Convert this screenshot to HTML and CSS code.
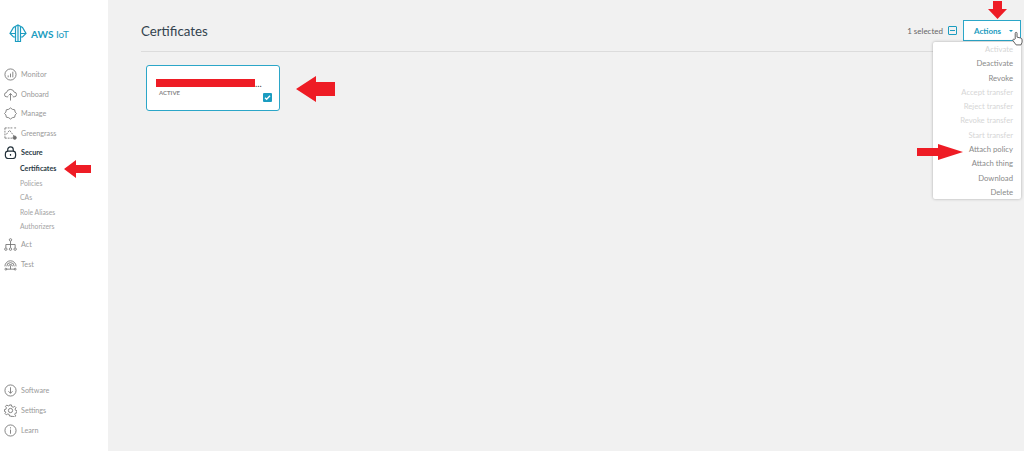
FILE: index.html
```html
<!DOCTYPE html>
<html>

<head>
  <meta name="viewport" content="width=device-width, initial-scale=1">
  <link rel="stylesheet" href="styles.css">
</head>

<body>
  <div class="sidebar">
    <div class="logo">
      <svg width="18" height="19" viewBox="0 0 18 19" fill="none" stroke="#1b9cc0" stroke-width="1.200">
        <path d="M9 1L13.500 3.500L17 9.500L13.500 13L11.500 13V17.500H6.500V13L4.500 13L1 9.500L4.500 3.500Z" />
        <path d="M6.500 3V13M11.500 3V13M9 1V18M1 9.500H6.500M11.500 9.500H17" />
      </svg>
      <span class="logo-text"><b>AWS</b> IoT</span>
    </div>

    <div class="nav-top">
      <a class="nav-item">
        <svg class="nav-icon" viewBox="0 0 14 14"><circle cx="7" cy="7" r="6" /><path d="M4.500 10V8M7 10V6M9.500 10V4" /></svg>
        Monitor
      </a>
      <a class="nav-item">
        <svg class="nav-icon" viewBox="0 0 14 14"><path d="M4.500 9.500H3a2.300 2.300 0 0 1-.3-4.600A4.300 4.300 0 0 1 11 4.500a2.500 2.500 0 0 1 0 5H9.500M7 13.500V6M5 8l2-2 2 2" /></svg>
        Onboard
      </a>
      <a class="nav-item">
        <svg class="nav-icon" viewBox="0 0 14 14"><path d="M7 1L9 2.500L11.500 3L12 5.500L13.500 7L12 8.500L11.500 11L9 11.500L7 13L5 11.500L2.500 11L2 8.500L0.500 7L2 5.500L2.500 3L5 2.500Z" /></svg>
        Manage
      </a>
      <a class="nav-item">
        <svg class="nav-icon" viewBox="0 0 14 14"><path d="M1 1H9M1 1V12M1 12H9M2.500 8L6 3.500L11 10M11 1H13" stroke-dasharray="2 1" /><circle class="icon-dot" cx="11.500" cy="11.500" r="1.800" /></svg>
        Greengrass
      </a>
      <a class="nav-item nav-active">
        <svg class="nav-icon" viewBox="0 0 14 14"><rect x="1.500" y="5.500" width="11" height="8" rx="3" /><path d="M4 5.500V4a3 3 0 0 1 6 0v1.500M7 8.500v2" /></svg>
        Secure
      </a>
      <div class="subnav">
        <a class="sub-item sub-active">Certificates</a>
        <a class="sub-item">Policies</a>
        <a class="sub-item">CAs</a>
        <a class="sub-item">Role Aliases</a>
        <a class="sub-item">Authorizers</a>
      </div>
      <a class="nav-item">
        <svg class="nav-icon" viewBox="0 0 14 14"><circle cx="7" cy="2" r="1.300" /><circle cx="2" cy="12" r="1.300" /><circle cx="7" cy="12" r="1.300" /><circle cx="12" cy="12" r="1.300" /><path d="M7 3.500V10.500M2 10.500V7H12V10.500" /></svg>
        Act
      </a>
      <a class="nav-item">
        <svg class="nav-icon" viewBox="0 0 14 14"><path d="M1 9a6 6 0 1 1 12 0M3 9a4 4 0 1 1 8 0M5 9a2 2 0 1 1 4 0M7 8v4M2.500 12h9" /><circle cx="2" cy="12" r="1" /><circle cx="12" cy="12" r="1" /></svg>
        Test
      </a>
    </div>

    <div class="nav-bottom">
      <a class="nav-item">
        <svg class="nav-icon" viewBox="0 0 14 14"><circle cx="7" cy="7" r="6" /><path d="M7 3.500V10M4.800 7.800L7 10L9.200 7.800" /></svg>
        Software
      </a>
      <a class="nav-item">
        <svg class="nav-icon" viewBox="0 0 14 14"><circle cx="7" cy="7" r="2.300" /><path d="M6 1h2l.4 1.800 1.500.7 1.600-1 1.400 1.400-1 1.600.7 1.500 1.400.4v2l-1.800.4-.6 1.400 1 1.600-1.400 1.400-1.600-1-1.500.6L8 13H6l-.4-1.700-1.500-.6-1.600 1-1.400-1.400 1-1.600L1.500 8.300 0.500 8V6l1.600-.4.500-1.500-1-1.600L3 1.100l1.600 1 1.500-.6Z" /></svg>
        Settings
      </a>
      <a class="nav-item">
        <svg class="nav-icon" viewBox="0 0 14 14"><circle cx="7" cy="7" r="6" /><path d="M7 6V10.500M7 3.500V4.800" /></svg>
        Learn
      </a>
    </div>
  </div>

  <div class="main">
    <div class="header">
      <span class="title">Certificates</span>
      <div class="header-right">
        <span class="selected">1 selected</span>
        <span class="deselect"></span>
        <div class="actions">
          Actions
          <span class="caret"></span>
        </div>
      </div>
    </div>

    <div class="card">
      <div class="card-name">
        <span class="redacted"></span>...
      </div>
      <div class="card-status">ACTIVE</div>
      <svg class="card-check" width="9" height="9" viewBox="0 0 9 9"><rect width="9" height="9" rx="1" fill="#1b9cc0" /><path d="M2 4.800L3.600 6.300L7 2.800" stroke="#fff" stroke-width="1.300" fill="none" /></svg>
    </div>

    <div class="dropdown">
      <a class="menu-item disabled">Activate</a>
      <a class="menu-item">Deactivate</a>
      <a class="menu-item">Revoke</a>
      <a class="menu-item disabled">Accept transfer</a>
      <a class="menu-item disabled">Reject transfer</a>
      <a class="menu-item disabled">Revoke transfer</a>
      <a class="menu-item disabled">Start transfer</a>
      <a class="menu-item">Attach policy</a>
      <a class="menu-item">Attach thing</a>
      <a class="menu-item">Download</a>
      <a class="menu-item">Delete</a>
    </div>
  </div>

  <!-- annotations drawn over the screenshot -->
  <svg class="arrow arrow-side" width="27" height="18" viewBox="0 0 27 18"><path d="M0 9L12 0V5H27V13H12V18Z" /></svg>
  <svg class="arrow arrow-card" width="39" height="26" viewBox="0 0 39 26"><path d="M0 13L20 0V6H39V20H20V26Z" /></svg>
  <svg class="arrow arrow-top" width="19" height="18" viewBox="0 0 19 18"><path d="M5 0H14V8H19L9.500 18L0 8H5Z" /></svg>
  <svg class="arrow arrow-attach" width="46" height="16" viewBox="0 0 46 16"><path d="M0 4H21V0L46 8L21 16V12H0Z" /></svg>

  <svg class="cursor" width="11" height="15" viewBox="0 0 12 15">
    <path d="M3.500 8V1.800a1 1 0 0 1 2 0V6l4 1c1 .3 1.500 1 1.500 2v2.500L9.800 14.500H4.500L1 9.800c-.6-1 .6-2 1.500-1.200Z" fill="#fff" stroke="#555" stroke-width="1" />
  </svg>
</body>

</html>
```
FILE: styles.css
```css
html,
body {
  height: 100%;
}

body {
  margin: 0;
  display: flex;
  overflow: hidden;
  background-color: #f1f1f1;
  font-family: Lato, "Liberation Sans", sans-serif;
  color: #8a8a8a;
}

a {
  text-decoration: none;
  display: block;
}

/* sidebar */
.sidebar {
  width: 108px;
  flex-shrink: 0;
  height: 100%;
  box-sizing: border-box;
  padding: 24px 0 11px 4px;
  background-color: #fff;
  display: flex;
  flex-direction: column;
}

.logo {
  display: flex;
  align-items: center;
  gap: 4px;
  height: 19px;
  padding-left: 5px;
  margin-bottom: 21.500px;
}

.logo-text {
  font-size: 10px;
  color: #1b9cc0;
}

.logo-text b {
  font-weight: 700;
}

.nav-top {
  flex: 1;
}

.nav-item {
  display: flex;
  align-items: center;
  gap: 4px;
  height: 19.800px;
  font-size: 7.200px;
  color: #9a9a9a;
}

.nav-icon {
  width: 13px;
  height: 13px;
  flex-shrink: 0;
  fill: none;
  stroke: #6f6f6f;
  stroke-width: 0.900;
}

.icon-dot {
  fill: #6f6f6f;
}

.nav-active {
  color: #2a3a45;
  font-weight: 700;
  height: 18px;
}

.nav-active .nav-icon {
  stroke: #22303a;
  stroke-width: 1.300;
}

.subnav {
  padding: 0 0 1.500px 16px;
}

.sub-item {
  height: 14.300px;
  line-height: 14.300px;
  font-size: 6.800px;
  color: #a3a3a3;
}

.sub-active {
  color: #2a3a45;
  font-weight: 700;
  font-size: 7.100px;
}

/* main area */
.main {
  flex: 1;
  position: relative;
  padding: 20px 3px 0 33px;
}

.header {
  display: flex;
  justify-content: space-between;
  align-items: center;
  height: 21px;
  padding-bottom: 10px;
  border-bottom: 1px solid #dcdcdc;
}

.title {
  font-size: 13.300px;
  color: #33434e;
}

.header-right {
  display: flex;
  align-items: center;
}

.selected {
  font-size: 8px;
  color: #666;
  margin-right: 5px;
}

.deselect {
  width: 9px;
  height: 9px;
  box-sizing: border-box;
  border: 1px solid #1b9cc0;
  border-radius: 1px;
  margin-right: 6px;
  background: linear-gradient(#1b9cc0, #1b9cc0) center / 5px 1px no-repeat;
}

.actions {
  width: 58px;
  height: 21px;
  box-sizing: border-box;
  border: 1px solid #2ba6c8;
  display: flex;
  align-items: center;
  padding-left: 10px;
  font-size: 8px;
  font-weight: 700;
  color: #1b9cc0;
  background-color: #fff;
  position: relative;
}

.caret {
  position: absolute;
  right: 7px;
  top: 9px;
  border-left: 2px solid transparent;
  border-right: 2px solid transparent;
  border-top: 2px solid #1b9cc0;
}

.card {
  position: relative;
  width: 134px;
  height: 46px;
  box-sizing: border-box;
  margin: 13px 0 0 5px;
  padding: 11px 9px 0 9px;
  background-color: #fff;
  border: 1.500px solid #2ba6c8;
  border-radius: 3px;
}

.card-name {
  display: flex;
  align-items: flex-end;
  height: 11px;
  font-size: 9.500px;
  line-height: 9px;
  color: #444;
}

.redacted {
  width: 99px;
  height: 8.500px;
  margin-bottom: 1px;
  background-color: #ee1c25;
}

.card-status {
  margin: 1px 0 0 3px;
  font-size: 6px;
  font-weight: 700;
  color: #8a8a8a;
}

.card-check {
  position: absolute;
  right: 7px;
  bottom: 8px;
}

.dropdown {
  position: absolute;
  top: 42px;
  right: 3px;
  width: 88px;
  height: 157px;
  box-sizing: border-box;
  background-color: #fff;
  border-radius: 2px;
  box-shadow: 0 0 3px rgba(0, 0, 0, 0.3);
}

.menu-item {
  height: 14.300px;
  line-height: 14.300px;
  padding-right: 8px;
  text-align: right;
  font-size: 7.700px;
  color: #8a8a8a;
}

.menu-item.disabled {
  color: #d6d6d6;
}

/* annotations */
.arrow {
  position: absolute;
  fill: #ee1c25;
}

.arrow-side {
  left: 64px;
  top: 160px;
}

.arrow-card {
  left: 296px;
  top: 76px;
}

.arrow-top {
  left: 988px;
  top: 1px;
}

.arrow-attach {
  left: 917px;
  top: 144px;
}

.cursor {
  position: absolute;
  left: 1012px;
  top: 31px;
}
```
